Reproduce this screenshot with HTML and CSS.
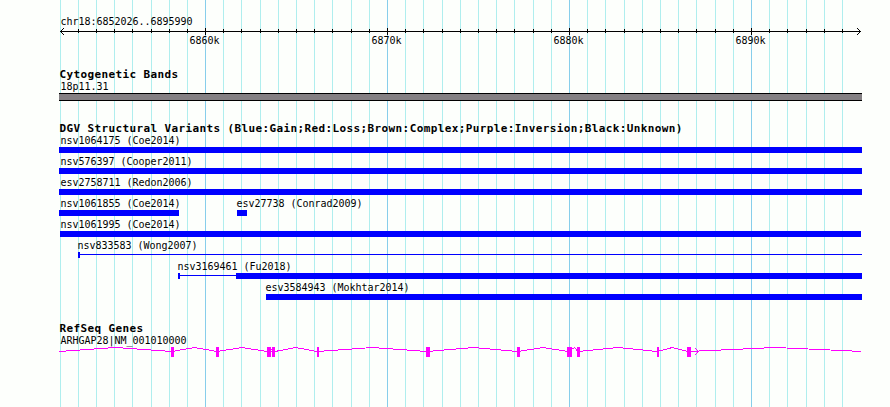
FILE: index.html
```
<!DOCTYPE html>
<html lang="en">

<head>
   <meta charset="UTF-8">
   <meta name="viewport" content="width=device-width, initial-scale=1.0">
   <title>chr18:6852026..6895990</title>
   <link rel="stylesheet" href="styles.css">
</head>

<body>
   <main class="browser">
      <!-- Grid lines behind all the tracks -->
      <svg class="gridlines" width="890" height="407">
         <path class="minor" d="M60.5 0v407M78.5 0v407M96.5 0v407M114.5 0v407M132.5 0v407M151.5 0v407M169.5 0v407M187.5 0v407M223.5 0v407M241.5 0v407M260.5 0v407M278.5 0v407M296.5 0v407M314.5 0v407M332.5 0v407M351.5 0v407M369.5 0v407M405.5 0v407M423.5 0v407M442.5 0v407M460.5 0v407M478.5 0v407M496.5 0v407M514.5 0v407M533.5 0v407M551.5 0v407M587.5 0v407M605.5 0v407M624.5 0v407M642.5 0v407M660.5 0v407M678.5 0v407M696.5 0v407M715.5 0v407M733.5 0v407M769.5 0v407M787.5 0v407M806.5 0v407M824.5 0v407M842.5 0v407" />
         <path class="major" d="M205.5 0v407M387.5 0v407M569.5 0v407M751.5 0v407" />
      </svg>

      <!-- Scale -->
      <svg class="ruler" width="890" height="60">
         <text x="60.5" y="25">chr18:6852026..6895990</text>
         <path d="M60 31.5H861M63.5 28v1M62.5 29v1M61.5 30v1M61.5 32v1M62.5 33v1M63.5 34v1M857.5 28v1M858.5 29v1M859.5 30v1M859.5 32v1M858.5 33v1M857.5 34v1" />
         <path d="M78.5 29v4M96.5 29v4M114.5 29v4M132.5 29v4M151.5 29v4M169.5 29v4M187.5 29v4M223.5 29v4M241.5 29v4M260.5 29v4M278.5 29v4M296.5 29v4M314.5 29v4M332.5 29v4M351.5 29v4M369.5 29v4M405.5 29v4M423.5 29v4M442.5 29v4M460.5 29v4M478.5 29v4M496.5 29v4M514.5 29v4M533.5 29v4M551.5 29v4M587.5 29v4M605.5 29v4M624.5 29v4M642.5 29v4M660.5 29v4M678.5 29v4M696.5 29v4M715.5 29v4M733.5 29v4M769.5 29v4M787.5 29v4M806.5 29v4M824.5 29v4M842.5 29v4" />
         <path d="M205.5 28v7M387.5 28v7M569.5 28v7M751.5 28v7" />
         <text x="189.5" y="44">6860k</text>
         <text x="371.5" y="44">6870k</text>
         <text x="553.5" y="44">6880k</text>
         <text x="735.5" y="44">6890k</text>
      </svg>

      <section class="track cytobands">
         <h2>Cytogenetic Bands</h2>
         <p class="label">18p11.31</p>
         <div class="band"></div>
      </section>

      <section class="track variants">
         <h2>DGV Structural Variants (Blue:Gain;Red:Loss;Brown:Complex;Purple:Inversion;Black:Unknown)</h2>
         <div class="row">
            <div class="feature" style="width: 803px"><p class="label">nsv1064175 (Coe2014)</p><div class="bar"></div></div>
         </div>
         <div class="row">
            <div class="feature" style="width: 803px"><p class="label">nsv576397 (Cooper2011)</p><div class="bar"></div></div>
         </div>
         <div class="row">
            <div class="feature" style="width: 803px"><p class="label">esv2758711 (Redon2006)</p><div class="bar"></div></div>
         </div>
         <div class="row">
            <div class="feature" style="width: 120px"><p class="label">nsv1061855 (Coe2014)</p><div class="bar"></div></div>
            <div class="feature inset" style="margin-left: 58px; width: 10px"><p class="label">esv27738 (Conrad2009)</p><div class="bar"></div></div>
         </div>
         <div class="row">
            <div class="feature flush" style="margin-left: 1px; width: 801px"><p class="label">nsv1061995 (Coe2014)</p><div class="bar"></div></div>
         </div>
         <div class="row">
            <div class="feature inset" style="margin-left: 19px; width: 784px">
               <p class="label">nsv833583 (Wong2007)</p>
               <div class="span"><i class="cap"></i><i class="line"></i></div>
            </div>
         </div>
         <div class="row">
            <div class="feature inset" style="margin-left: 119px; width: 684px">
               <p class="label">nsv3169461 (Fu2018)</p>
               <div class="span"><i class="cap"></i><i class="line"></i><i class="bar" style="width: 626px"></i></div>
            </div>
         </div>
         <div class="row">
            <div class="feature inset" style="margin-left: 207px; width: 596px"><p class="label">esv3584943 (Mokhtar2014)</p><div class="bar"></div></div>
         </div>
      </section>

      <section class="track genes">
         <h2>RefSeq Genes</h2>
         <p class="label">ARHGAP28|NM_001010000</p>
         <svg class="gene" width="803" height="10" viewBox="59 347 803 10">
            <!-- Introns -->
            <path class="intron" d="M59 351.5L115.5 347.5L172 351.5L194.5 347.5L217 351.5L242 347.5L267 351.5H275L295.5 347.5L317 351.5L372.5 347.5L427 351.5L473.5 347.5L518 351.5L543 347.5L568 351.5L574.5 347.5L578 351.5L618.5 347.5L657 351.5L672.5 347.5L688 351.5L775.5 347.5L861 351.4" />
            <path class="intron" d="M271 349.5h1M695.5 348v1M696.5 349v1M697.5 350v1M697.5 352v1M696.5 353v1M695.5 354v1" />
            <!-- Exons -->
            <path class="exon" d="M171 347h3v10h-3zM216 347h3v10h-3zM267 347h4v10h-4zM272 347h3v10h-3zM317 347h2v10h-2zM426 347h4v10h-4zM517 347h3v10h-3zM567 347h5v10h-5zM577 347h3v10h-3zM657 347h2v10h-2zM687 347h4v10h-4z" />
         </svg>
      </section>
   </main>
</body>

</html>
```
FILE: styles.css
```
/* General page styling */
body {
   margin: 0;
   background-color: #fdfffc;
   color: #000;
   font-family: "DejaVu Sans Mono", monospace;
   font-size: 10px;
   letter-spacing: -0.02px;
}

h2,
p {
   margin: 0;
   white-space: nowrap;
}

svg {
   display: block;
   shape-rendering: crispEdges;
}

.browser {
   position: relative;
   height: 407px;
   overflow: hidden;
}

/* Grid */
.gridlines {
   position: absolute;
   top: 0;
   left: 0;
   z-index: -1;
}

.minor {
   stroke: #afeeee;
}

.major {
   stroke: #87ceeb;
}

.ruler path {
   stroke: #000;
   fill: none;
}

/* Tracks */
.track {
   width: 803px;
   margin-left: 59px;
}

.track h2 {
   height: 12px;
   padding-left: 0.5px;
   font-size: 11px;
   line-height: 14px;
   letter-spacing: 0.38px;
}

.label {
   height: 15px;
   line-height: 17px;
   padding-left: 1.5px;
}

.cytobands {
   padding-top: 8px;
}

.cytobands .label {
   height: 13px;
   line-height: 13px;
}

.band {
   height: 6px;
   background-color: #848083;
   border-top: 1px solid #000;
   border-bottom: 1px solid #000;
}

/* Structural variants */
.variants {
   padding-top: 21px;
}

.variants h2 {
   height: 10px;
}

.row {
   display: flex;
   height: 21px;
}

.flush .label {
   padding-left: 0.5px;
}

.inset .label {
   padding-left: 0.5px;
   margin-left: -1px;
}

.bar {
   height: 6px;
   background-color: #00f;
}

.span {
   display: flex;
   align-items: center;
   height: 6px;
}

.cap {
   width: 2px;
   height: 6px;
   background-color: #00f;
}

.line {
   flex: 1;
   height: 1px;
   margin-bottom: 1px;
   background-color: #00f;
}

/* Genes */
.genes {
   padding-top: 22px;
}

.genes h2 {
   height: 10px;
}

.intron {
   fill: none;
   stroke: #f0f;
}

.exon {
   fill: #f0f;
}
```
